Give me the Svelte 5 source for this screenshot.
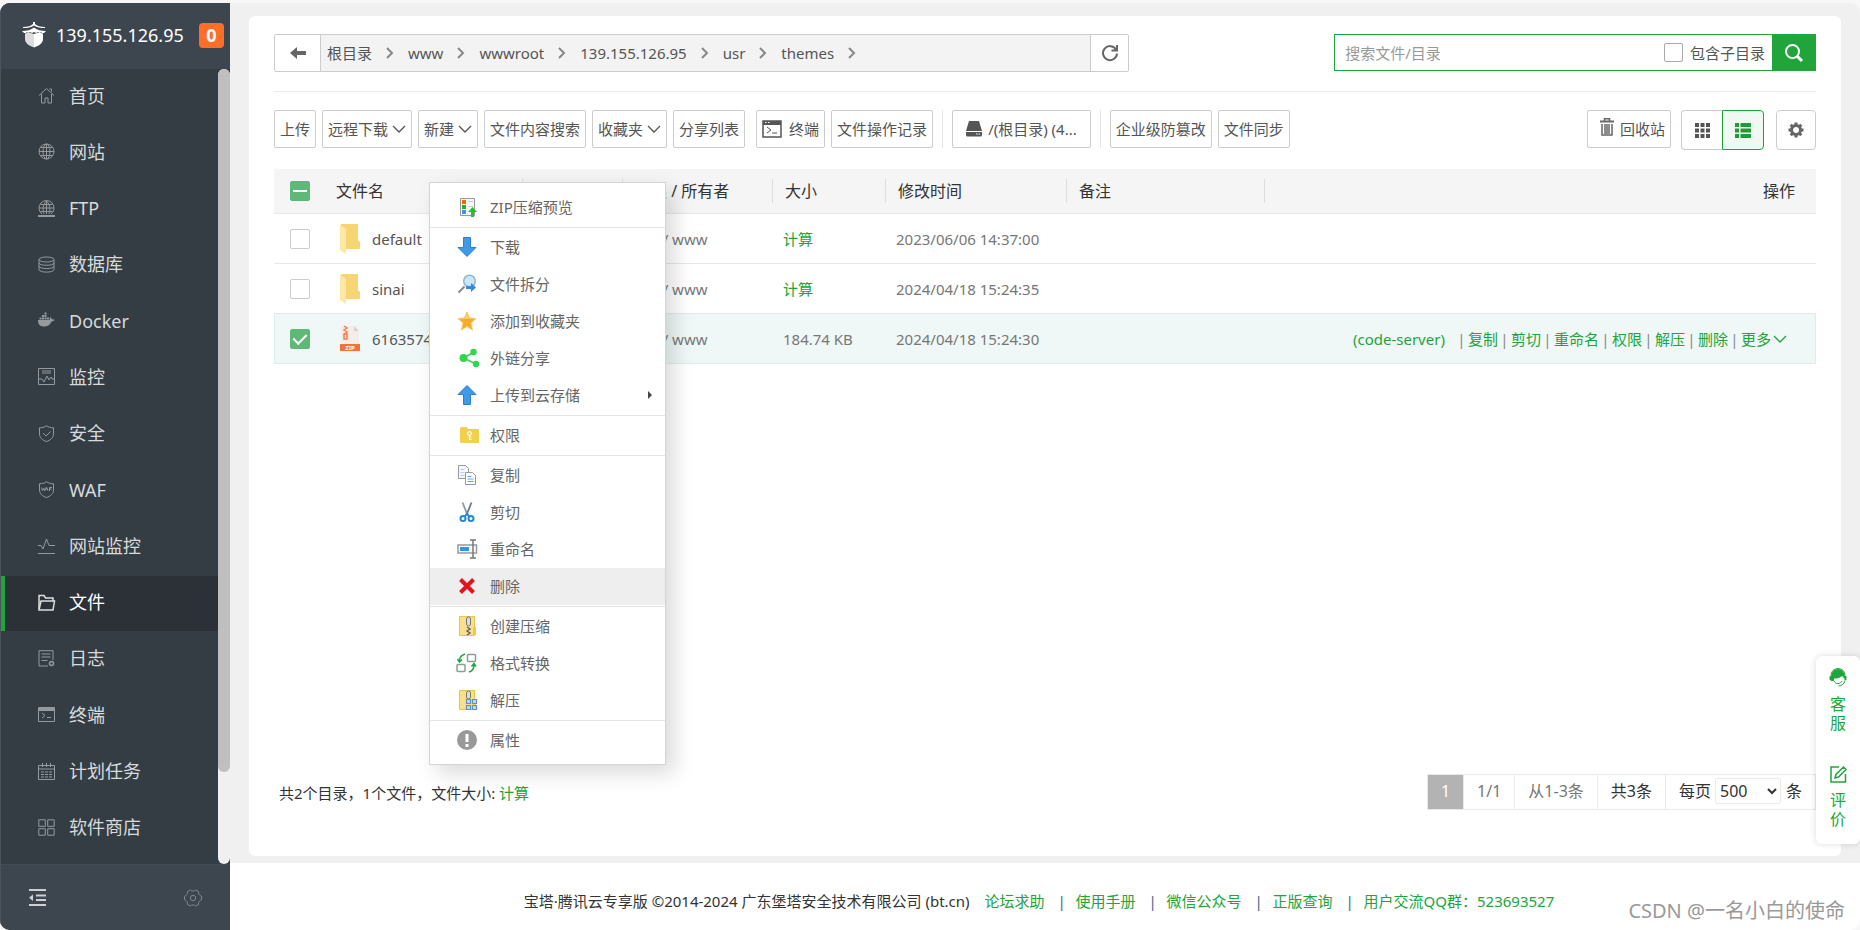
<script>
  const navItems = [
    { label: '首页', icon: '<path d="M1 8.500 8.500 1.500 16 8.500M3.500 7v9h3.500v-5h3v5h3.500V7M11.500 2h2v2.500"/>' },
    { label: '网站', icon: '<circle cx="8.500" cy="8.500" r="7.500"/><ellipse cx="8.500" cy="8.500" rx="3.500" ry="7.500"/><path d="M1 8.500h15M8.500 1v15M2.500 4.500h12M2.500 12.500h12"/>' },
    { label: 'FTP', icon: '<path d="M4 14a7.500 7.500 0 1 1 9 0M1 8h15M8.500 1v13M2.500 4.500h12M2.500 11.500h12M6 14C4.500 10 4.500 5 8.500 1M11 14c1.500-4 1.500-9-2.500-13"/><path d="M0 16h17" stroke-width="2"/>' },
    { label: '数据库', icon: '<ellipse cx="8.500" cy="3.500" rx="7.500" ry="2.500"/><path d="M1 3.500v10c0 3.500 15 3.500 15 0v-10M1 7c0 3 15 3 15 0M1 10.300c0 3 15 3 15 0"/>' },
    { label: 'Docker', icon: '<path fill="currentColor" stroke="none" d="M0 8h11.500c.5-.8.300-2 .800-3 1.200.800 1.400 1.600 1.500 2.200 1-.2 2.200 0 3 .600-.7 1.400-2 1.600-3.300 1.600C12 13 9.500 14.500 6 14.500 2 14.500 0 12.500 0 8zM1.500 5.500h2v2h-2zM4 5.500h2v2H4zM6.500 5.500h2v2h-2zM9 5.500h2v2H9zM4 3h2v2H4zM6.500 3h2v2h-2zM6.500.500h2v2h-2z"/>' },
    { label: '监控', icon: '<path d="M.500.500h16v16H.500zM4 3h9M4 5h9M1 11h3l2 3 3-6 2 4 2-3 1 2h2"/>' },
    { label: '安全', icon: '<path d="M8.500.800c2 1.300 4.500 2 7 2v6c0 4-3 6.500-7 7.700-4-1.200-7-3.700-7-7.700v-6c2.500 0 5-.7 7-2zM5 8l3 3 4.500-4.500"/>' },
    { label: 'WAF', icon: '<path d="M8.500.800c2 1.300 4.500 2 7 2v6c0 4-3 6.500-7 7.700-4-1.200-7-3.700-7-7.700v-6c2.500 0 5-.7 7-2z"/><path d="M3.500 6.500l1 3 1-2 1 2 .800-3M7.500 9.500l1.200-3 1.200 3M11.500 10V6.500H14M11.500 8h2"/>' },
    { label: '网站监控', icon: '<path d="M0 8.500h3l2 3.500L8.500 2 11 8.500h6M0 16.500h17"/>' },
    { label: '文件', icon: '<path d="M1 15V1.500h5l1.500 2.500H15v3" stroke-width="1.500"/><path d="M1 16l2-9h13.500l-1.500 9z" stroke-width="1.500"/>', active: true },
    { label: '日志', icon: '<path d="M10 16H1V.700h14V10M3.500 4h9M3.500 7h9M3.500 10.500h6"/><circle cx="13.500" cy="13.500" r="2" stroke-width="1.500"/>' },
    { label: '终端', icon: '<path d="M.500 1.500h16v14H.500zM4 7l3 2.500L4 12M9 11.500h4"/><path d="M1 3.500h15" stroke-width="3"/>' },
    { label: '计划任务', icon: '<path d="M.500 2.500h16v14H.500zM4.500 0v4M8.500 0v4M12.500 0v4M1 6h15M3 9h3M7 9h3M11 9h3M3 11.500h3M7 11.500h3M11 11.500h3M3 14h3M7 14h3M11 14h3"/>' },
    { label: '软件商店', icon: '<path d="M.800.800h6.500v6.500H.800zM9.700.800h6.500v6.500H9.700zM.800 9.700h6.500v6.500H.800zM9.700 9.700h6.500v6.500H9.700z"/>' }
  ];

  const crumbs = ['根目录', 'www', 'wwwroot', '139.155.126.95', 'usr', 'themes'];

  const zipBody =
    '<path fill="#fbe08a" stroke="#e8c34d" d="M2.500.500h15v19h-15z"/><path fill="#f0c84c" d="M16 11h3v8h-3z"/>';

  const menuGroups = [
    [
      { label: 'ZIP压缩预览', icon: '<path fill="#f7f7f7" stroke="#999" d="M3.500 1.500h14v17h-14z"/><path fill="#f60" d="M5 3h4v4H5z"/><path fill="#1db52b" d="M5 8h4v4H5z"/><path fill="#3d96e0" d="M5 13h4v4H5z"/><path stroke="#ccc" d="M11 4.500h5M11 9.500h5"/><path fill="#22c12e" d="M15.500 10l4.500 5h-3v5h-3v-5h-3z"/>' }
    ],
    [
      { label: '下载', icon: '<path fill="#3d9ae8" stroke="#2f80cc" d="M6.500.500h7v10H19L10 19.500 1 10.500h5.500z"/>' },
      { label: '文件拆分', icon: '<path stroke="#888" stroke-width="2" d="M1.500 18.500l6-6"/><circle cx="12.500" cy="7" r="5.800" fill="#c9e7fb" stroke="#9ab4c8" stroke-width="1.500"/><path fill="#2f8be0" d="M9 12h5V9l5 4.500-5 4.500v-3H9z"/>' },
      { label: '添加到收藏夹', icon: '<path fill="#fbab2c" stroke="#f5ca62" d="M10 1l2.600 6 6.400.500-5 4.500 1.500 7L10 15.500 4.500 19 6 12 1 7.500 7.400 7z"/><path fill="#fdd36c" d="M10 2l2 5.500 5.500.500H2.500L8 7.500z"/>' },
      { label: '外链分享', icon: '<path stroke="#2fd84a" stroke-width="1.500" d="M17 4L6.500 10 19 16"/><g fill="#2fd84a"><circle cx="16.500" cy="4" r="3.200"/><circle cx="6.500" cy="10" r="4"/><circle cx="19" cy="16" r="3.200"/></g>' },
      { label: '上传到云存储', icon: '<path fill="#3d9ae8" stroke="#2f80cc" d="M6.500 19.500h7v-10H19L10 .500 1 9.500h5.500z"/>', submenu: true }
    ],
    [
      { label: '权限', icon: '<path fill="#f3cf4e" d="M3 3.500q0-1.500 1.500-1.500h5l2 2h9q1.500 0 1.500 1.500v11q0 1.500-1.500 1.500h-16Q3 18 3 16.500z"/><circle cx="12.500" cy="8.500" r="1.800" stroke="#fff" stroke-width="1.200"/><path stroke="#fff" stroke-width="1.200" d="M12.500 10v5M12.500 12h2M12.500 14.500h2"/>' }
    ],
    [
      { label: '复制', icon: '<path fill="#f3f6fb" stroke="#999" d="M1.500.500h7l3 3v10h-10z"/><path stroke="#b3cdf2" d="M3.500 4.500h4M3.500 7.500h4M3.500 10.500h4"/><path fill="#fff" stroke="#999" d="M8.500 7.500h7l3 3v9h-10z"/><path stroke="#5fa2f5" d="M10.500 11.500h4M10.500 14h6M10.500 16.500h6"/>' },
      { label: '剪切', icon: '<path stroke="#8d99a3" stroke-width="1.800" d="M5.500.500l5 12.500"/><path stroke="#6f7c88" stroke-width="1.800" d="M14.500.500l-5 12.500"/><path stroke="#2388d8" stroke-width="2" d="M10 11.500l2 3M10 11.500l-2 3"/><circle cx="6" cy="16.500" r="2.500" stroke="#2388d8" stroke-width="2"/><circle cx="14" cy="16.500" r="2.500" stroke="#2388d8" stroke-width="2"/>' },
      { label: '重命名', icon: '<path fill="#fff" stroke="#999" stroke-width="1.500" d="M1 6h18.500v8H1z"/><path fill="#3097e8" d="M3 8h9v4H3z"/><path stroke="#777" stroke-width="1.500" d="M13 1h6M16 1v18M13 19h6"/>' },
      { label: '删除', icon: '<path stroke="#e3141c" stroke-width="4" d="M3.500 3.500l13 13M16.500 3.500l-13 13"/>', active: true }
    ],
    [
      { label: '创建压缩', icon: zipBody + '<rect x="9.500" y="1" width="4" height="9" rx="2" fill="#ddd" stroke="#777"/><path stroke="#666" stroke-width="1.500" d="M10 11l3 2-3 2 3 2-3 2"/>' },
      { label: '格式转换', icon: '<rect x="10.500" y="1.500" width="8" height="7" rx="1" stroke="#8c9e90" stroke-width="1.500"/><rect x="0" y="11.500" width="8" height="7" rx="1" stroke="#8c9e90" stroke-width="1.500"/><path stroke="#20a53a" stroke-width="1.500" d="M8 1C4.500 2 2.500 4 2.500 8M.500 6l2 3L5 6.500M12 19c3.500-1 5-3 5-7M14.500 13.500l2.500-3 2 3"/>' },
      { label: '解压', icon: zipBody + '<rect x="9.500" y="1" width="4" height="8" rx="2" fill="#ddd" stroke="#777"/><path fill="#b9dcf5" stroke="#5595cc" stroke-width="1.200" d="M9.500 9.500h4v4h-4zM15.500 9.500h4v4h-4zM9.500 15.500h4v4h-4zM15.500 15.500h4v4h-4z"/>' }
    ],
    [
      { label: '属性', icon: '<circle cx="10" cy="10" r="10" fill="#999"/><path stroke="#fff" stroke-width="3" d="M10 4v8M10 14v3"/>' }
    ]
  ];

  const rowActions = ['复制', '剪切', '重命名', '权限', '解压', '删除'];
  const footerLinks = ['论坛求助', '使用手册', '微信公众号', '正版查询', '用户交流QQ群：523693527'];

  let files = $state([
    { name: 'default', type: 'dir', size: '', time: '2023/06/06 14:37:00', checked: false },
    { name: 'sinai', type: 'dir', size: '', time: '2024/04/18 15:24:35', checked: false },
    { name: '6163574', type: 'zip', size: '184.74 KB', time: '2024/04/18 15:24:30', checked: true }
  ]);

  let allChecked = $derived(files.every((f) => f.checked));
  let someChecked = $derived(files.some((f) => f.checked) && !allChecked);
  let includeSub = $state(false);
  let pageSize = $state('500');

  function toggleAll(e) {
    const value = e.currentTarget.checked;
    files.forEach((f) => (f.checked = value));
  }
</script>

{#snippet chevronDown()}
  <svg width="14" height="8" viewBox="0 0 14 8" fill="none" stroke="currentColor" stroke-width="1.300"><path d="M1 1l6 6 6-6" /></svg>
{/snippet}

<div class="app">
  <aside class="sidebar">
    <header class="brand">
      <svg width="24" height="26" viewBox="0 0 24 26" fill="#fff">
        <path d="M1 5c5 0 8-1 10-3V0h2v2c2 2 5 3 10 3v1c-5 0-8-.5-11-2.500C9 5.500 6 6 1 6z" />
        <path d="M0 9c5 0 9-1 12-3.500C15 8 19 9 24 9l-2 2h-2l-1-1-1 1-2-1-2 1-2-1-2 1-2-1-2 1-1-1-1 1H2z" />
        <path fill="#ddd" d="M3 11.500l4-1 5 1.500v13.500C7 24 3 21 3 17z" />
        <path d="M12 12l5-1.500 4 1V17c0 4-4 7-9 8.500z" />
      </svg>
      <span class="host">139.155.126.95</span>
      <span class="badge">0</span>
    </header>
    <div class="nav-wrap">
      <ul class="nav">
        {#each navItems as item}
          <li>
            <a href="#nav" class:active={item.active}>
              <svg width="17" height="17" viewBox="0 0 17 17" fill="none" stroke="currentColor">{@html item.icon}</svg>
              {item.label}
            </a>
          </li>
        {/each}
      </ul>
      <div class="track"><div class="thumb"></div></div>
    </div>
    <div class="side-foot">
      <button aria-label="collapse">
        <svg width="17" height="17" viewBox="0 0 17 17" stroke="#ccd0d3" stroke-width="2"><path d="M0 1h17M7 6.500h10M7 11h10M0 16h17" /><path stroke="none" fill="#ccd0d3" d="M0 8.700L4 5.500v6.500z" /></svg>
      </button>
      <button aria-label="settings">
        <svg width="18" height="18" viewBox="0 0 18 18" fill="none" stroke="#81868b" stroke-linejoin="round"><path d="M6.200 1c1 1.400 4.600 1.400 5.600 0L14.600 2.600c-.5 1.800.9 4.200 2.900 4.600v3.600c-2 .4-3.400 2.800-2.900 4.600L11.800 17c-1-1.400-4.600-1.400-5.600 0L3.400 15.400C3.900 13.600 2.500 11.200.500 10.800V7.200C2.500 6.800 3.900 4.400 3.400 2.600z" /><circle cx="9" cy="9" r="2.700" /></svg>
      </button>
    </div>
  </aside>

  <div class="main">
    <div class="content">
      <section class="card">
        <div class="top-row">
          <div class="address">
            <button class="back" aria-label="back">
              <svg width="16" height="12" viewBox="0 0 16 12" fill="#666"><path d="M0 6l7-6v4h9v4H7v4z" /></svg>
            </button>
            <nav class="crumbs">
              {#each crumbs as crumb}
                <a href="#path">{crumb}</a>
                <svg width="8" height="12" viewBox="0 0 8 12" fill="none" stroke="#888" stroke-width="2"><path d="M1 1l5 5-5 5" /></svg>
              {/each}
            </nav>
            <button class="refresh" aria-label="refresh">
              <svg width="18" height="18" viewBox="0 0 18 18" fill="none" stroke="#666" stroke-width="2"><path d="M15 5.500A7 7 0 1 0 16 9.500M16 1v5.500h-5.500" /></svg>
            </button>
          </div>
          <div class="search">
            <input type="text" placeholder="搜索文件/目录" aria-label="搜索文件/目录" />
            <label><input type="checkbox" class="check small" bind:checked={includeSub} />包含子目录</label>
            <button aria-label="search">
              <svg width="18" height="18" viewBox="0 0 18 18" fill="none" stroke="#fff" stroke-width="2"><circle cx="7.500" cy="7.500" r="6.500" /><path d="M12 12l5 5" stroke-width="3" /></svg>
            </button>
          </div>
        </div>

        <div class="toolbar">
          <button class="btn">上传</button>
          <button class="btn">远程下载{@render chevronDown()}</button>
          <button class="btn">新建{@render chevronDown()}</button>
          <button class="btn">文件内容搜索</button>
          <button class="btn">收藏夹{@render chevronDown()}</button>
          <button class="btn">分享列表</button>
          <button class="btn term">
            <svg width="20" height="18" viewBox="0 0 20 18" fill="none" stroke="#555"><path d="M1 1h18v16H1z" stroke-width="1.500" /><path d="M5 7l4 3-4 3M10 13h5" /><path d="M1 3h18" stroke-width="4" /><path d="M3 2.500h1.500M6 2.500h1.500" stroke="#fff" /></svg>
            终端
          </button>
          <button class="btn">文件操作记录</button>
          <span class="sep"></span>
          <button class="btn disk">
            <svg width="16" height="16" viewBox="0 0 16 16" fill="#555"><path d="M3 0h10l3 10H0zM0 11h16v3q0 1.500-1.500 1.500h-13Q0 15.500 0 14z" /><path d="M10 13h4" stroke="#fff" stroke-dasharray="1.500 1" /></svg>
            /(根目录) (4...
          </button>
          <span class="sep"></span>
          <button class="btn">企业级防篡改</button>
          <button class="btn">文件同步</button>

          <div class="tools-right">
            <button class="btn trash">
              <svg width="14" height="18" viewBox="0 0 14 18" fill="none" stroke="#666"><path d="M0 3.500h14" stroke-width="2" /><path d="M4.500 3V.800h5V3M2 6v11h10V6M5 6v10M7 6v10M9 6v10" stroke-width="1.500" /></svg>
              回收站
            </button>
            <div class="views">
              <button aria-label="grid">
                <svg width="15" height="15" viewBox="0 0 15 15" fill="#555"><path d="M0 0h4v4H0zM5.500 0h4v4h-4zM11 0h4v4h-4zM0 5.500h4v4H0zM5.500 5.500h4v4h-4zM11 5.500h4v4h-4zM0 11h4v4H0zM5.500 11h4v4h-4zM11 11h4v4h-4z" /></svg>
              </button>
              <button class="on" aria-label="list">
                <svg width="16" height="15" viewBox="0 0 16 15" fill="#1f9a36"><path d="M0 0h4v4H0zM5.500 0H16v4H5.500zM0 5.500h4v4H0zM5.500 5.500H16v4H5.500zM0 11h4v4H0zM5.500 11H16v4H5.500z" /></svg>
              </button>
            </div>
            <button class="gear" aria-label="options">
              <svg width="16" height="16" viewBox="0 0 16 16" fill="none" stroke="#666"><circle cx="8" cy="8" r="4.500" stroke-width="3" /><path stroke-width="3" d="M8 .500v3M8 12.500v3M.500 8h3M12.500 8h3M2.700 2.700l2 2M11.300 11.300l2 2M2.700 13.300l2-2M11.300 4.700l2-2" /></svg>
            </button>
          </div>
        </div>

        <table>
          <colgroup>
            <col class="c-check" /><col class="c-name" /><col class="c-guard" /><col class="c-perm" />
            <col class="c-size" /><col class="c-time" /><col class="c-note" /><col />
          </colgroup>
          <thead>
            <tr>
              <th class="pick">
                <input type="checkbox" class="check" aria-label="all" checked={allChecked} indeterminate={someChecked} onchange={toggleAll} />
              </th>
              <th><span>文件名</span></th>
              <th><span></span></th>
              <th><span>权限 / 所有者</span></th>
              <th><span>大小</span></th>
              <th><span>修改时间</span></th>
              <th><span>备注</span></th>
              <th class="ops">操作</th>
            </tr>
          </thead>
          <tbody>
            {#each files as file}
              <tr class:selected={file.checked}>
                <td class="pick"><input type="checkbox" class="check" aria-label={file.name} bind:checked={file.checked} /></td>
                <td>
                  <div class="file">
                    {#if file.type === 'dir'}
                      <svg width="20" height="30" viewBox="0 0 20 30"><path fill="#f6d673" d="M1 0h17v16l2 2v7H1z" /><path fill="#fde9a2" d="M0 1l6 4v25l-6-4z" /></svg>
                    {:else}
                      <svg width="20" height="26" viewBox="0 0 20 26"><path fill="#f5edea" d="M1 0h13l5 5v14H1z" /><path fill="#d9d0cc" d="M14 0l5 5h-5z" /><path d="M4 0l3 2-3 2 3 2-3 2M4 8h3v5H4z" fill="none" stroke="#fa7a4b" stroke-width="1.500" /><path fill="#f5703c" d="M0 18h20v7H0z" /><text x="10" y="24" font-size="6" font-weight="bold" fill="#fff" text-anchor="middle">ZIP</text></svg>
                    {/if}
                    {file.name}
                  </div>
                </td>
                <td></td>
                <td class="dim">755 / www</td>
                <td class="dim">
                  {#if file.size}{file.size}{:else}<a href="#size">计算</a>{/if}
                </td>
                <td class="dim">{file.time}</td>
                <td></td>
                <td class="actions">
                  {#if file.checked}
                    <div>
                      <a href="#code" class="code">(code-server)</a>
                      {#each rowActions as action}
                        <i>|</i><a href="#action">{action}</a>
                      {/each}
                      <i>|</i><a href="#more">更多</a>{@render chevronDown()}
                    </div>
                  {/if}
                </td>
              </tr>
            {/each}
          </tbody>
        </table>

        <div class="card-foot">
          <p>共2个目录，1个文件，文件大小: <a href="#total">计算</a></p>
          <div class="pager">
            <span class="cur">1</span>
            <span>1/1</span>
            <span>从1-3条</span>
            <span class="dark">共3条</span>
            <label class="dark">
              每页
              <select bind:value={pageSize}>
                <option>100</option>
                <option>500</option>
              </select>
              条
            </label>
          </div>
        </div>
      </section>
    </div>

    <footer class="copyright">
      <span class="owner">宝塔·腾讯云专享版 ©2014-2024 广东堡塔安全技术有限公司 (bt.cn)</span>
      {#each footerLinks as link, i}
        {#if i > 0}<i>|</i>{/if}
        <a href="#footer">{link}</a>
      {/each}
    </footer>
  </div>

  <div class="context-menu">
    {#each menuGroups as group}
      <ul>
        {#each group as entry}
          <li>
            <button class:active={entry.active}>
              <svg width="20" height="20" viewBox="0 0 20 20" fill="none">{@html entry.icon}</svg>
              {entry.label}
              {#if entry.submenu}<b class="arrow"></b>{/if}
            </button>
          </li>
        {/each}
      </ul>
    {/each}
  </div>

  <div class="float-bar">
    <a href="#service">
      <svg width="18" height="18" viewBox="0 0 18 18" fill="#20a53a"><path d="M2.500 6a6.500 6 0 0 1 13 0L17.500 7.500v3L15.500 12V9.500L13 7c-2 2-5 2.500-8 2.500V12H2.500L.500 10.500v-3z" /><path d="M2 6a7 6.500 0 0 1 14 0M5 12c2 3.500 6 3.500 8 0M16 12c-1 3-3 4.500-6.500 5" fill="none" stroke="#20a53a" /></svg>
      <span>客服</span>
    </a>
    <a href="#rate">
      <svg width="17" height="17" viewBox="0 0 17 17" fill="none" stroke="#20a53a" stroke-width="1.500"><path d="M9 1H1v15h14.500V8M5 12l1-3.500L13.500 1 16 3.500 8.500 11z" /></svg>
      <span>评价</span>
    </a>
  </div>

  <div class="watermark">CSDN @一名小白的使命</div>
</div>

<style>
  :global(body) {
    background: #f7f7f7;
    font-family: "Noto Sans", "Noto Sans CJK SC", sans-serif;
  }

  .app,
  .app * {
    box-sizing: border-box;
  }

  .app {
    position: relative;
    display: flex;
    margin-top: 3px;
    min-height: calc(100vh - 3px);
    background: #f0f0f0;
    border-radius: 10px;
    overflow: hidden;
    font-size: 15px;
    line-height: 20px;
    color: #555;
  }

  a {
    color: #20a53a;
    text-decoration: none;
  }

  i {
    font-style: normal;
  }

  ul {
    list-style: none;
    margin: 0;
    padding: 0;
  }

  svg {
    display: block;
    flex: none;
    overflow: visible;
  }

  button {
    display: flex;
    align-items: center;
    justify-content: center;
    padding: 0;
    border: none;
    background: none;
    font: inherit;
    color: inherit;
    cursor: pointer;
    white-space: nowrap;
  }

  /* sidebar */
  .sidebar {
    flex: none;
    display: flex;
    flex-direction: column;
    width: 230px;
    background: #353d44;
    border-left: 1px solid #4b545b;
  }

  .brand {
    display: flex;
    align-items: center;
    height: 66px;
    padding: 0 6px 2px 21px;
    background: #3d454f;
    color: #fff;
  }

  .host {
    flex: 1;
    padding-left: 10px;
    font-size: 18px;
  }

  .badge {
    width: 25px;
    height: 25px;
    border-radius: 4px;
    background: #ff6e26;
    font-size: 18px;
    font-weight: 700;
    line-height: 25px;
    text-align: center;
  }

  .nav-wrap {
    flex: 1;
    display: flex;
  }

  .nav {
    flex: 1;
    display: flex;
    flex-direction: column;
    justify-content: space-between;
    padding-bottom: 8px;
  }

  .nav a {
    display: flex;
    align-items: center;
    gap: 14px;
    height: 55px;
    padding: 0 0 2px 33px;
    border-left: 4px solid transparent;
    font-size: 18px;
    color: #d8dadc;
  }

  .nav svg {
    color: #949a9e;
  }

  .nav a.active {
    background: #2c3138;
    border-left-color: #20a53a;
    color: #fff;
  }

  .nav a.active svg {
    color: #ddd;
  }

  .track {
    display: grid;
    grid-template-rows: 23fr 3fr;
    width: 12px;
    border-radius: 6px;
    background: #f0f0f0;
  }

  .thumb {
    border-radius: 6px;
    background: #bfbfbf;
  }

  .side-foot {
    display: flex;
    align-items: center;
    justify-content: space-between;
    height: 66px;
    padding: 0 28px;
    border-top: 1px solid #414c5a;
    background: #3d454f;
  }

  /* page */
  .main {
    flex: 1;
    display: flex;
    flex-direction: column;
    min-width: 0;
  }

  .content {
    flex: 1;
    display: flex;
    padding: 13px 19px 7px;
  }

  .card {
    flex: 1;
    display: flex;
    flex-direction: column;
    min-width: 0;
    padding: 18px 25px 46px;
    border-radius: 6px;
    background: #fff;
  }

  .top-row {
    display: grid;
    grid-template-columns: 71fr 17fr 40fr;
    padding-bottom: 19px;
    border-bottom: 1px solid #ebebeb;
  }

  .address {
    display: flex;
    height: 38px;
    border: 1px solid #ccc;
    border-radius: 2px;
  }

  .back {
    width: 46px;
    border-right: 1px solid #ccc;
  }

  .refresh {
    width: 38px;
    border-left: 1px solid #ccc;
  }

  .crumbs {
    flex: 1;
    display: flex;
    align-items: center;
    gap: 14px;
    padding-left: 6px;
    background: #f3f3f3;
  }

  .crumbs a {
    color: #555;
  }

  .search {
    grid-column: 3;
    display: flex;
    align-items: center;
    height: 37px;
    border: 1px solid #20a53a;
  }

  .search input[type="text"] {
    flex: 1;
    min-width: 0;
    padding: 0 0 0 10px;
    border: none;
    outline: none;
    font: inherit;
  }

  .search input::placeholder {
    color: #999;
  }

  .search label {
    display: flex;
    align-items: center;
    gap: 7px;
    padding-right: 7px;
  }

  .search button {
    width: 43px;
    height: 35px;
    background: #20a53a;
  }

  .check {
    appearance: none;
    display: block;
    position: relative;
    width: 20px;
    height: 20px;
    margin: 0;
    border: 1px solid #ccc;
    border-radius: 2px;
    background: #fff;
  }

  .check.small {
    width: 19px;
    height: 19px;
    border-color: #aaa;
  }

  .check:checked,
  .check:indeterminate {
    border-color: #5fb878;
    background: #5fb878;
  }

  .check:checked::before {
    content: "";
    position: absolute;
    left: 5px;
    top: 1px;
    width: 6px;
    height: 11px;
    border: solid #fff;
    border-width: 0 2px 2px 0;
    transform: rotate(45deg);
  }

  .check:indeterminate::before {
    content: "";
    position: absolute;
    left: 2px;
    top: 8px;
    width: 14px;
    height: 2px;
    background: #fff;
  }

  .toolbar {
    display: flex;
    align-items: flex-start;
    gap: 6px;
    padding: 18px 0 19px;
  }

  .btn {
    gap: 4px;
    height: 38px;
    padding: 0 5px;
    border: 1px solid #ccc;
    border-radius: 2px;
    background: #fff;
  }

  .term {
    gap: 7px;
    margin-left: 5px;
  }

  .disk {
    gap: 6px;
    padding: 0 13px;
  }

  .sep {
    width: 1px;
    height: 38px;
    margin: 0 3px;
    background: #e6e6e6;
  }

  .tools-right {
    display: flex;
    gap: 10px;
    margin-left: auto;
  }

  .trash {
    gap: 6px;
    padding-left: 12px;
  }

  .trash svg {
    margin-bottom: 4px;
  }

  .views {
    display: flex;
  }

  .views button {
    width: 41px;
    height: 40px;
    border: 1px solid #ccc;
    border-right: none;
    border-radius: 4px 0 0 4px;
  }

  .views .on {
    width: 42px;
    border: 1px solid #20a53a;
    border-radius: 0 4px 4px 0;
    background: #f0f9f1;
  }

  .gear {
    width: 40px;
    height: 40px;
    margin-left: 2px;
    border: 1px solid #ccc;
    border-radius: 4px;
  }

  /* file list */
  table {
    width: 100%;
    table-layout: fixed;
    border-spacing: 0;
  }

  .c-check { width: 50px; }
  .c-name { width: 199px; }
  .c-guard { width: 100px; }
  .c-perm { width: 150px; }
  .c-size { width: 113px; }
  .c-time { width: 181px; }
  .c-note { width: 198px; }

  th {
    height: 45px;
    padding: 0;
    border-bottom: 1px solid #e8e8e8;
    background: #f5f5f5;
    font-size: 16px;
    font-weight: 400;
    text-align: left;
    color: #333;
  }

  th span {
    display: block;
    height: 24px;
    padding-left: 12px;
    border-right: 1px solid #ddd;
    line-height: 24px;
  }

  .ops {
    padding-right: 21px;
    text-align: right;
  }

  td {
    height: 50px;
    padding: 0;
    border-bottom: 1px solid #e8e8e8;
    white-space: nowrap;
  }

  .pick {
    padding-left: 16px;
  }

  .dim {
    padding-left: 10px;
    color: #777;
  }

  .file {
    display: flex;
    align-items: center;
    gap: 12px;
    padding-left: 16px;
  }

  .selected td {
    border-bottom-color: #dceee9;
    background: #eff8f7;
  }

  .selected td:first-child {
    border-left: 1px solid #dceee9;
    padding-left: 15px;
  }

  .selected td:last-child {
    border-right: 1px solid #dceee9;
  }

  .actions div {
    display: flex;
    align-items: center;
    justify-content: flex-end;
    gap: 2px;
    padding-right: 28px;
    color: #20a53a;
  }

  .actions i {
    width: 9px;
    text-align: center;
    color: #888;
  }

  .actions .code {
    padding-right: 10px;
  }

  .card-foot {
    display: flex;
    align-items: center;
    justify-content: space-between;
    margin-top: auto;
    padding-left: 5px;
  }

  .card-foot p {
    margin: 2px 0 0;
    color: #333;
  }

  .pager {
    display: flex;
    height: 36px;
    border: 1px solid #eaeaea;
    font-size: 16px;
    color: #777;
  }

  .pager > * {
    display: flex;
    align-items: center;
    padding: 0 13px 2px;
    border-right: 1px solid #eaeaea;
  }

  .pager > :last-child {
    border-right: none;
  }

  .pager .cur {
    background: #b3b3b3;
    color: #fff;
  }

  .pager .dark {
    color: #333;
  }

  .pager select {
    width: 66px;
    height: 26px;
    margin: 0 5px 0 4px;
    border: 1px solid #eaeaea;
    border-radius: 2px;
    background: #fff;
    font: inherit;
    color: inherit;
  }

  .copyright {
    display: flex;
    align-items: center;
    justify-content: center;
    gap: 13px;
    height: 67px;
    padding: 8px 12px 0 0;
    background: #fff;
    color: #333;
  }

  .copyright .owner {
    padding-right: 2px;
  }

  .copyright i {
    width: 5px;
    text-align: center;
    color: #3f6596;
  }

  /* right click menu */
  .context-menu {
    position: absolute;
    left: 429px;
    top: 179px;
    width: 237px;
    padding: 5px 0 4px;
    border: 1px solid #d4d4d4;
    background: #fff;
    box-shadow: 8px 8px 20px rgba(0, 0, 0, 0.15);
  }

  .context-menu ul {
    padding: 1px 0;
  }

  .context-menu ul + ul {
    border-top: 1px solid #e4e4e4;
  }

  .context-menu button {
    width: 100%;
    height: 37px;
    gap: 13px;
    justify-content: flex-start;
    padding: 0 13px 2px 27px;
    color: #666;
  }

  .context-menu button.active {
    background: #eee;
  }

  .arrow {
    margin-left: auto;
    border: 4px solid transparent;
    border-left-color: #444;
    border-right: none;
  }

  .float-bar {
    position: absolute;
    right: 0;
    bottom: 86px;
    display: flex;
    flex-direction: column;
    gap: 33px;
    width: 44px;
    padding: 13px 0 15px;
    border-radius: 6px;
    background: #fff;
    box-shadow: 0 0 6px rgba(0, 0, 0, 0.15);
    font-size: 16px;
    line-height: 19px;
  }

  .float-bar a {
    display: flex;
    flex-direction: column;
    align-items: center;
    gap: 8px;
  }

  .float-bar span {
    width: 16px;
  }

  .watermark {
    position: absolute;
    right: 15px;
    bottom: 7px;
    font-size: 20px;
    line-height: 24px;
    color: #999;
  }
</style>
